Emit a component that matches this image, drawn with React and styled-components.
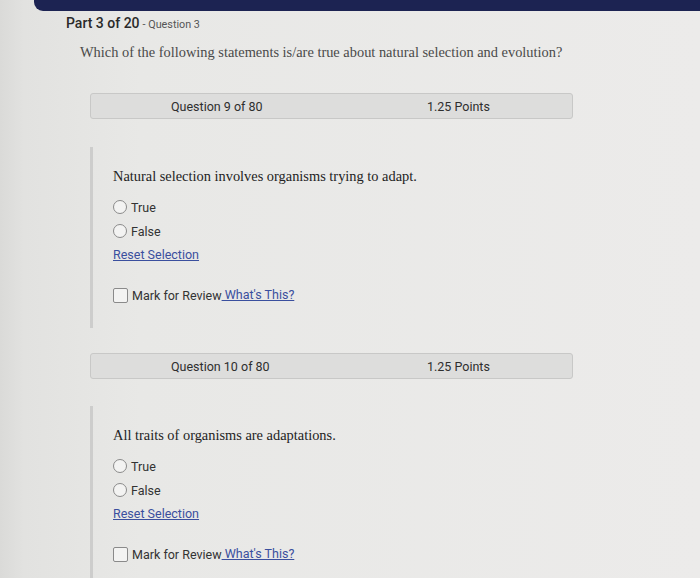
import React from 'react';
import styled, { createGlobalStyle } from 'styled-components';

const GlobalStyle = createGlobalStyle`
    html, body {
        margin: 0;
        padding: 0;
    }
    body {
        width: 700px;
        height: 578px;
        overflow: hidden;
        background: linear-gradient(90deg, #dadad8 0px, #e2e2e0 24px, #e8e8e6 140px, #ecebea 700px);
        font-family: Roboto, "Liberation Sans", sans-serif;
    }
`;

const Page = styled.div`
    display: flex;
    flex-direction: column;

    & > * {
        flex-shrink: 0;
    }
`;

const TopBar = styled.div`
    margin-left: 34px;
    height: 11px;
    background: #1c2352;
    border-bottom-left-radius: 9px;
`;

const PartTitle = styled.div`
    margin: 3px 0 0 66px;
    display: flex;
    align-items: baseline;
    gap: 3px;
    color: #2a2a2a;
    font-size: 14px;
    font-weight: 500;
    line-height: 18px;

    & > span {
        font-size: 10.8px;
        font-weight: 400;
        color: #555;
    }
`;

const Prompt = styled.p`
    margin: 9px 0 0 80px;
    font-family: "Liberation Serif", "Times New Roman", serif;
    font-size: 14.4px;
    line-height: 18px;
    color: #4a4a4a;
`;

const Block = styled.section`
    margin-left: 90px;
    width: 483px;
`;

const Header = styled.div`
    margin-top: ${p => p.$top}px;
    height: 26px;
    display: flex;
    align-items: center;
    padding-left: 80px;
    box-sizing: border-box;
    background: #dddddc;
    border: 1px solid #c8c8c7;
    border-radius: 3px;
    font-size: 12.5px;
    color: #2e2e2e;
`;

const HeaderLabel = styled.span`
    width: 256px;
`;

const Body = styled.div`
    margin-top: ${p => p.$top}px;
    border-left: 3px solid #cdcdcc;
    padding: 20px 0 23px 20px;
    display: flex;
    flex-direction: column;
`;

const Statement = styled.div`
    font-family: "Liberation Serif", "Times New Roman", serif;
    font-size: 14.4px;
    line-height: 18px;
    color: #232323;
    margin-bottom: 10px;
`;

const Option = styled.label`
    display: flex;
    align-items: center;
    gap: 4px;
    height: 24px;
    font-size: 12.5px;
    color: #333;
`;

const Radio = styled.span`
    width: 12px;
    height: 12px;
    border-radius: 50%;
    border: 1px solid #8a8a8a;
    background: #f3f3f2;
`;

const Link = styled.a`
    color: #3a4f9e;
    text-decoration: underline;
    font-size: 12.5px;
    line-height: 24px;
    cursor: pointer;
`;

const Review = styled.div`
    margin-top: 18px;
    display: flex;
    align-items: center;
    height: 20px;
    font-size: 12.5px;
    color: #333;
`;

const Check = styled.span`
    width: 13px;
    height: 13px;
    margin-right: 4px;
    border: 1px solid #8a8a8a;
    border-radius: 2px;
    background: #f3f3f2;
`;

const questions = [
    { num: 9, text: 'Natural selection involves organisms trying to adapt.', headTop: 32, bodyTop: 28 },
    { num: 10, text: 'All traits of organisms are adaptations.', headTop: 25, bodyTop: 27 },
];

const Question = ({ q }) => (
    <Block>
        <Header $top={q.headTop}>
            <HeaderLabel>Question {q.num} of 80</HeaderLabel>
            <span>1.25 Points</span>
        </Header>
        <Body $top={q.bodyTop}>
            <Statement>{q.text}</Statement>
            <Option><Radio />True</Option>
            <Option><Radio />False</Option>
            <div><Link>Reset Selection</Link></div>
            <Review>
                <Check />
                Mark for Review<Link>&nbsp;What's This?</Link>
            </Review>
        </Body>
    </Block>
);

const App = () => (
    <>
        <GlobalStyle />
        <Page>
            <TopBar />
            <PartTitle>Part 3 of 20 <span>- Question 3</span></PartTitle>
            <Prompt>Which of the following statements is/are true about natural selection and evolution?</Prompt>
            {questions.map(q => <Question key={q.num} q={q} />)}
        </Page>
    </>
);

export default App;
